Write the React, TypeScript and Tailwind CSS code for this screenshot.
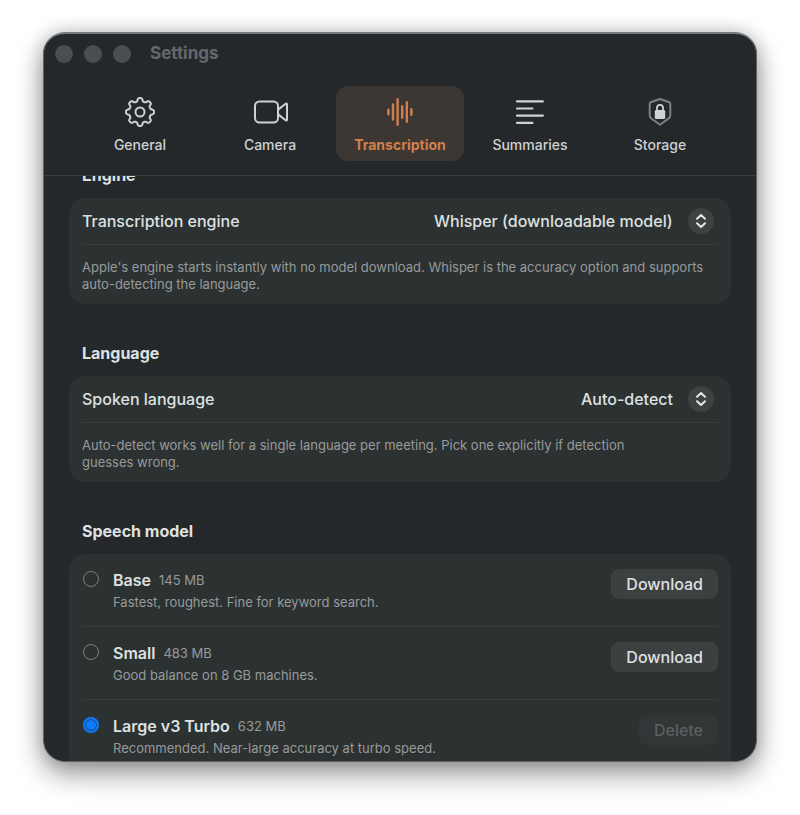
import { useLayoutEffect, useRef, useState } from "react";
import type { ReactNode } from "react";

// Outline of an eight-toothed gear centred on 18,15
const gearPoints = Array.from({ length: 160 }, (_, i) => {
	const angle = (i / 160) * Math.PI * 2;
	const radius = 12.4 + 1.6 * Math.tanh(2.2 * Math.cos(8 * angle));
	const x = 18 + radius * Math.sin(angle);
	const y = 15 - radius * Math.cos(angle);
	return `${x.toFixed(2)},${y.toFixed(2)}`;
}).join(" ");

const iconProps = {
	width: 36,
	height: 30,
	viewBox: "0 0 36 30",
	fill: "none",
	stroke: "currentColor",
	strokeWidth: 2,
	strokeLinecap: "round" as const,
	strokeLinejoin: "round" as const,
	"aria-hidden": true,
};

function GearIcon() {
	return (
		<svg {...iconProps}>
			<polygon points={gearPoints} />
			<circle cx="18" cy="15" r="4.5" />
		</svg>
	);
}

function CameraIcon() {
	return (
		<svg {...iconProps}>
			<rect x="3" y="4.5" width="23" height="21" rx="4.5" />
			<path d="M26.5 12.4 33.6 6.8q1.4-1 1.4.8v14.8q0 1.8-1.4.8L26.5 17.6" />
		</svg>
	);
}

function WaveIcon() {
	return (
		<svg {...iconProps} strokeWidth={2.4}>
			<path d="M6.4 12.8v4.4M11 7.4v15.2M15.6 2.2v25.6M20.2 9.2v11.6M24.8 5.2v19.6M29.4 12.2v5.6" />
		</svg>
	);
}

function LinesIcon() {
	return (
		<svg {...iconProps} strokeWidth={2.2}>
			<path d="M5 4.4h25.8M5 11.5h15.4M5 18.7h25.8M5 25.9h15.4" />
		</svg>
	);
}

function ShieldIcon() {
	return (
		<svg {...iconProps}>
			<path
				d="M18 2 27.3 5.3q1 .4 1 1.5v11.4q0 2.2-1.9 3.5L18 27.7l-8.4-6q-1.9-1.3-1.9-3.5V6.8q0-1.1 1-1.5Z"
				stroke="#7d8183"
			/>
			<rect x="12.8" y="13" width="10.4" height="9" rx="1.2" fill="currentColor" stroke="none" />
			<path d="M15 13.5v-2.7a3 3 0 0 1 6 0v2.7" strokeWidth={1.8} />
		</svg>
	);
}

const tabs = [
	{ name: "General", icon: <GearIcon /> },
	{ name: "Camera", icon: <CameraIcon /> },
	{ name: "Transcription", icon: <WaveIcon /> },
	{ name: "Summaries", icon: <LinesIcon /> },
	{ name: "Storage", icon: <ShieldIcon /> },
];

const models = [
	{
		id: "base",
		name: "Base",
		size: "145 MB",
		note: "Fastest, roughest. Fine for keyword search.",
		installed: false,
	},
	{
		id: "small",
		name: "Small",
		size: "483 MB",
		note: "Good balance on 8 GB machines.",
		installed: false,
	},
	{
		id: "turbo",
		name: "Large v3 Turbo",
		size: "632 MB",
		note: "Recommended. Near-large accuracy at turbo speed.",
		installed: true,
	},
];

function Section({ title, children }: { title: string; children: ReactNode }) {
	return (
		<section>
			<h2 className="mb-[11px] px-[13px] text-base leading-6 font-bold text-[#dfe1e1]">
				{title}
			</h2>
			<div className="rounded-2xl bg-[#2c3131] px-[13px]">{children}</div>
		</section>
	);
}

function SelectRow({
	id,
	label,
	value,
	note,
}: {
	id: string;
	label: string;
	value: string;
	note: string;
}) {
	return (
		<>
			<div className="flex h-[47px] items-center justify-between border-b border-[#383d3d]">
				<label htmlFor={id} className="text-base font-medium text-[#dfe1e1]">
					{label}
				</label>
				<div className="relative flex items-center pr-1">
					<select
						id={id}
						defaultValue={value}
						className="appearance-none bg-transparent pr-[41px] text-base font-medium text-[#dfe1e1] outline-none"
					>
						<option>{value}</option>
					</select>
					<span className="pointer-events-none absolute right-1 flex size-[26px] items-center justify-center rounded-full bg-[#3d4242]">
						<svg
							width="12"
							height="16"
							viewBox="0 0 12 16"
							fill="none"
							stroke="#e4e6e6"
							strokeWidth="2"
							strokeLinecap="round"
							strokeLinejoin="round"
							aria-hidden="true"
						>
							<path d="M2 5.8 6 2l4 3.8M2 10.2 6 14l4-3.8" />
						</svg>
					</span>
				</div>
			</div>
			<p className="pt-3.5 pb-[11px] text-[13px] leading-[17px] text-pretty text-[#979b9b]">
				{note}
			</p>
		</>
	);
}

export default function App() {
	const [activeTab, setActiveTab] = useState("Transcription");
	const [model, setModel] = useState("turbo");
	const scroller = useRef<HTMLDivElement>(null);

	// Open slightly scrolled, with the first heading under the toolbar
	useLayoutEffect(() => {
		if (scroller.current) scroller.current.scrollTop = 33;
	}, []);

	return (
		<div className="h-screen bg-white px-[43px] pt-8 pb-[53px] font-['Inter',sans-serif]">
			<main className="flex h-full flex-col overflow-hidden rounded-[22px] border border-t-2 border-[#5f6365] border-t-[#75797b] bg-[#24282b] shadow-[0_12px_28px_rgba(0,0,0,0.4),0_0_18px_rgba(0,0,0,0.18)]">
				<header className="shrink-0 border-b border-[#3a3e41]">
					<div className="flex h-10 items-center gap-[11px] border-b border-[#272b2e] px-[11px]">
						<span className="size-[18px] rounded-full bg-[#4a4e51]" />
						<span className="size-[18px] rounded-full bg-[#4a4e51]" />
						<span className="size-[18px] rounded-full bg-[#4a4e51]" />
						<h1 className="ml-2 text-[17px] font-bold text-[#64686b]">Settings</h1>
					</div>
					<nav className="flex justify-center gap-0.5 px-4 pt-3 pb-3.5">
						{tabs.map((tab) => (
							<button
								key={tab.name}
								onClick={() => setActiveTab(tab.name)}
								className={`flex h-[75px] w-32 flex-col items-center gap-2 rounded-xl pt-[11px] ${
									activeTab === tab.name
										? "bg-[#3d3733] font-bold text-[#d07f4d]"
										: "font-medium text-[#cfd1d2]"
								}`}
							>
								{tab.icon}
								<span className="text-sm leading-5">{tab.name}</span>
							</button>
						))}
					</nav>
				</header>

				<div
					ref={scroller}
					className="min-h-0 flex-1 overflow-y-auto [scrollbar-width:none]"
				>
					<div className="flex flex-col gap-[37px] px-[25px] py-5">
						<Section title="Engine">
							<SelectRow
								id="engine"
								label="Transcription engine"
								value="Whisper (downloadable model)"
								note="Apple's engine starts instantly with no model download. Whisper is the accuracy option and supports auto-detecting the language."
							/>
						</Section>

						<Section title="Language">
							<SelectRow
								id="language"
								label="Spoken language"
								value="Auto-detect"
								note="Auto-detect works well for a single language per meeting. Pick one explicitly if detection guesses wrong."
							/>
						</Section>

						<Section title="Speech model">
							{models.map((item) => (
								<div
									key={item.id}
									className="flex items-start border-b border-[#383d3d] py-[15px] last:border-b-0"
								>
									<input
										type="radio"
										name="model"
										id={item.id}
										checked={model === item.id}
										onChange={() => setModel(item.id)}
										className="mt-0.5 mr-3.5 ml-px size-4 shrink-0 appearance-none rounded-full border border-[#7b7f7f] checked:border-2 checked:border-[#0a7aff] checked:bg-[#0a7aff] checked:shadow-[inset_0_0_0_1px_#23405f]"
									/>
									<div className="flex-1">
										<label
											htmlFor={item.id}
											className="flex items-center gap-2 leading-[22px]"
										>
											<span className="text-base leading-[22px] font-semibold text-[#dfe1e1]">
												{item.name}
											</span>
											<span className="text-[13px] leading-[22px] text-[#979b9b]">
												{item.size}
											</span>
										</label>
										<p className="mt-[3px] text-[13px] leading-[17px] text-[#979b9b]">
											{item.note}
										</p>
									</div>
									<button
										disabled={item.installed}
										className="h-[30px] rounded-lg bg-[#3b4040] px-[15px] text-base font-medium text-[#dfe1e1] disabled:bg-[#313636] disabled:text-[#5c6060]"
									>
										{item.installed ? "Delete" : "Download"}
									</button>
								</div>
							))}
						</Section>
					</div>
				</div>
			</main>
		</div>
	);
}
